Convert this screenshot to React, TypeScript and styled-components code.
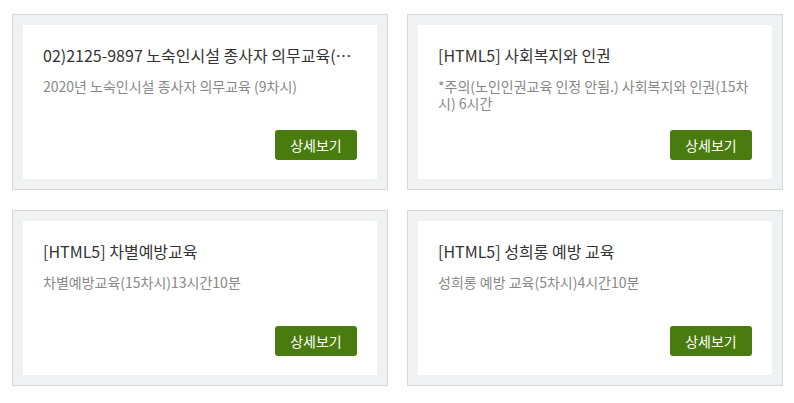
import React from "react";
import styled, { createGlobalStyle } from "styled-components";

const GlobalStyle = createGlobalStyle`
  html, body {
    margin: 0;
    padding: 0;
    background: #ffffff;
  }
  body {
    font-family: "Noto Sans CJK KR", "Noto Sans", sans-serif;
  }
`;

const Grid = styled.div`
  display: grid;
  grid-template-columns: 376px 376px;
  column-gap: 19px;
  row-gap: 20px;
  padding: 14px 0 0 12px;
`;

const Card = styled.div`
  border: 1px solid #d6d7d9;
  background: #f0f1f3;
  padding: 10px;
  height: 176px;
  box-sizing: border-box;
`;

const Inner = styled.div`
  background: #ffffff;
  height: 100%;
  box-sizing: border-box;
  padding: 19px 20px 19px 20px;
  display: flex;
  flex-direction: column;
`;

const Title = styled.h3`
  margin: 0;
  font-size: 16px;
  font-weight: 400;
  line-height: 22px;
  color: #333333;
  white-space: nowrap;
  overflow: hidden;
  text-overflow: ellipsis;
`;

const Desc = styled.p`
  margin: 12px 0 0;
  font-size: 14px;
  line-height: 17px;
  color: #888888;
  word-break: break-all;
`;

const Footer = styled.div`
  margin-top: auto;
  display: flex;
  justify-content: flex-end;
`;

const Button = styled.button`
  width: 82px;
  height: 30px;
  border: none;
  border-radius: 3px;
  background: #4a7b0e;
  color: #ffffff;
  font-family: "Noto Sans CJK KR", "Noto Sans", sans-serif;
  font-size: 14px;
  padding: 0;
  cursor: pointer;
`;

const items = [
  {
    title: "02)2125-9897 노숙인시설 종사자 의무교육(9차시)",
    desc: "2020년 노숙인시설 종사자 의무교육 (9차시)",
  },
  {
    title: "[HTML5] 사회복지와 인권",
    desc: "*주의(노인인권교육 인정 안됨.) 사회복지와 인권(15차시) 6시간",
  },
  {
    title: "[HTML5] 차별예방교육",
    desc: "차별예방교육(15차시)13시간10분",
  },
  {
    title: "[HTML5] 성희롱 예방 교육",
    desc: "성희롱 예방 교육(5차시)4시간10분",
  },
];

export default function App() {
  return (
    <>
      <GlobalStyle />
      <Grid>
        {items.map((it, i) => (
          <Card key={i}>
            <Inner>
              <Title>{it.title}</Title>
              <Desc>{it.desc}</Desc>
              <Footer>
                <Button>상세보기</Button>
              </Footer>
            </Inner>
          </Card>
        ))}
      </Grid>
    </>
  );
}
